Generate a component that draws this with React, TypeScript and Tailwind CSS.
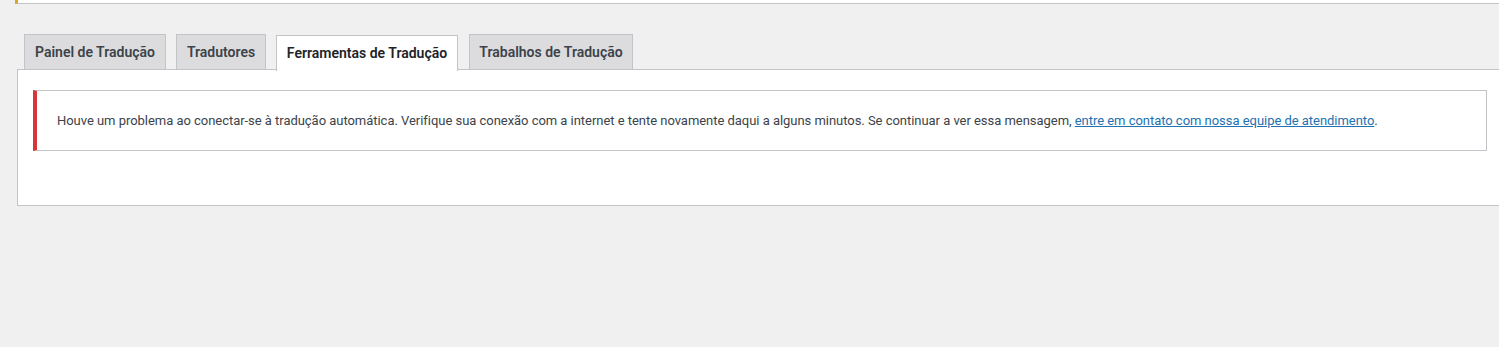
const tabs = [
  { label: "Painel de Tradução", width: "w-[142px]", active: false },
  { label: "Tradutores", width: "w-[90px]", active: false },
  { label: "Ferramentas de Tradução", width: "w-[182px]", active: true },
  { label: "Trabalhos de Tradução", width: "w-[164px]", active: false },
]

function Tab({ label, width, active }: { label: string; width: string; active: boolean }) {
  if (active) {
    return (
      <div
        className={`${width} relative z-10 -mb-[2px] h-[36px] border border-b-0 border-[#c3c4c7] bg-white text-center text-[14px] font-semibold leading-[34px] text-[#1d2327]`}
      >
        {label}
      </div>
    )
  }
  return (
    <div
      className={`${width} -mb-px h-[36px] border border-[#c3c4c7] bg-[#dcdcde] text-center text-[14px] font-semibold leading-[34px] text-[#3c434a]`}
    >
      {label}
    </div>
  )
}

export default function App() {
  return (
    <div className="h-screen w-full overflow-hidden bg-[#f0f0f1] font-['Roboto',sans-serif]">
      {/* top notice, mostly scrolled away */}
      <div className="ml-[15px] h-[4px] w-[1500px] border-b border-l-[3px] border-b-[#c3c4c7] border-l-[#dba617] bg-white" />

      <div className="mt-[30px] flex items-end gap-[10px] pl-[24px]">
        {tabs.map((t, i) => (
          <div key={t.label} className={i === 3 ? "ml-px" : ""}>
            <Tab {...t} />
          </div>
        ))}
      </div>

      <div className="ml-[17px] w-[1486px] border border-[#c3c4c7] bg-white px-[15px] pb-[54px] pt-[20px]">
        <div className="flex h-[61px] items-center border border-l-4 border-[#c3c4c7] border-l-[#d63638] bg-white pl-[20px] text-[13px] tracking-[-0.035px] text-[#3c434a]">
          <p className="whitespace-nowrap">
            Houve um problema ao conectar-se à tradução automática. Verifique sua conexão com a internet e tente
            novamente daqui a alguns minutos. Se continuar a ver essa mensagem,{" "}
            <a href="#" className="text-[#2271b1] underline">
              entre em contato com nossa equipe de atendimento
            </a>
            .
          </p>
        </div>
      </div>
    </div>
  )
}
